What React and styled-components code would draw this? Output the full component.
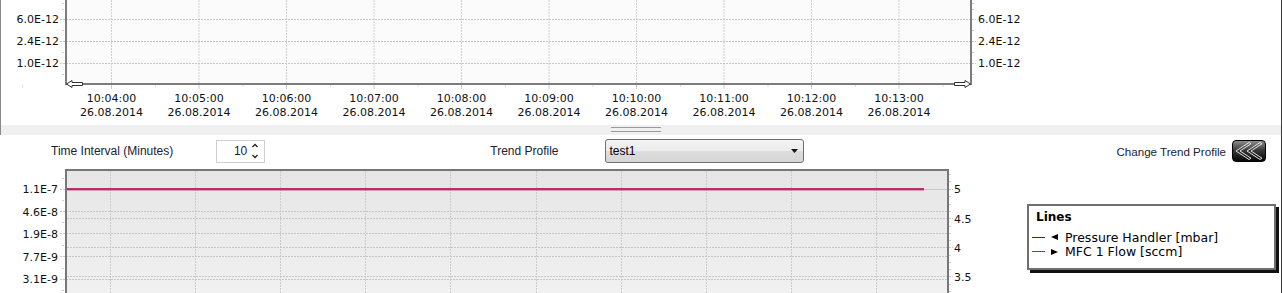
import React from "react";
import styled, { createGlobalStyle } from "styled-components";

const GlobalStyle = createGlobalStyle`
  html, body { margin: 0; padding: 0; background: #ffffff; }
  body { font-family: "Liberation Sans", Arial, sans-serif; }
`;

const Root = styled.div`
  width: 1282px;
  height: 293px;
  overflow: hidden;
  box-sizing: border-box;
  border-right: 1px solid #3c3c3c;
  background: #ffffff;
  display: flex;
  flex-direction: column;
`;

const TopPanel = styled.section`
  flex: none;
  height: 125px;
  border-left: 1px solid #8a8a8a;
  overflow: hidden;
`;

const Splitter = styled.div`
  flex: none;
  height: 10px;
  box-sizing: border-box;
  background: #f0f0f0;
  border-left: 1px solid #8a8a8a;
  padding: 2px 0 0 610px;
  display: flex;
  flex-direction: column;
  gap: 3px;
`;

const GripLine = styled.div`
  width: 50px;
  height: 1px;
  background: #9a9a9a;
`;

const BottomPanel = styled.section`
  flex: 1;
  display: flex;
  flex-direction: column;
  min-height: 0;
`;

const Toolbar = styled.div`
  flex: none;
  height: 32px;
  display: flex;
  align-items: center;
  padding: 0 15px 0 51px;
`;

const Label = styled.span`
  font-family: "Liberation Sans", Arial, sans-serif;
  font-size: ${(p) => p.$size || 12}px;
  color: #1b2230;
  margin-left: ${(p) => p.$ml || 0}px;
  white-space: nowrap;
`;

const Spinner = styled.div`
  margin-left: ${(p) => p.$ml}px;
  width: 49px;
  height: 23px;
  box-sizing: border-box;
  border: 1px solid #cfcfcf;
  display: flex;
  align-items: center;
  justify-content: flex-end;
  padding-right: 5px;
  gap: 4px;
  font-size: 12px;
  color: #1b2230;
`;

const Dropdown = styled.div`
  margin-left: ${(p) => p.$ml}px;
  width: 199px;
  height: 24px;
  box-sizing: border-box;
  border: 1px solid #707070;
  border-radius: 3px;
  background: linear-gradient(#f3f3f3 0%, #ebebeb 50%, #dddddd 51%, #d6d6d6 100%);
  display: flex;
  align-items: center;
  justify-content: space-between;
  padding: 0 5px 0 4px;
  font-size: 12px;
  color: #000;
`;

const Spacer = styled.div`
  flex: 1;
`;

const IconButton = styled.button`
  margin-left: 6px;
  width: 34px;
  height: 22px;
  padding: 0;
  box-sizing: border-box;
  border: 1px solid #000;
  border-radius: 4px;
  background: linear-gradient(#8c8c8c 0%, #3c3c3c 45%, #060606 100%);
  display: flex;
  align-items: center;
  justify-content: center;
`;

const ChartRow = styled.div`
  flex: 1;
  display: flex;
  align-items: flex-start;
`;

const Legend = styled.div`
  margin: 37px 0 0 27px;
  width: 249px;
  height: 66px;
  box-sizing: border-box;
  border: 2px solid #6f6f6f;
  box-shadow: 3px 3px 0 #111;
  background: #fff;
  padding: 4px 0 0 3px;
  font-family: "DejaVu Sans", Verdana, sans-serif;
  color: #000;
`;

const LegendTitle = styled.div`
  font-weight: bold;
  font-size: 12px;
  line-height: 15px;
  margin: 0 0 5px 4px;
`;

const LegendRow = styled.div`
  display: flex;
  align-items: center;
  height: 14.5px;
  font-size: 12.5px;
  white-space: nowrap;
`;

const Swatch = styled.span`
  display: inline-block;
  width: 13px;
  height: 1px;
  background: ${(p) => p.$color};
  margin-right: 6px;
`;

const Pointer = styled.svg`
  width: 7px;
  height: 6px;
  margin-right: 7px;
  flex: none;
`;

const FONT = '"DejaVu Sans", Verdana, sans-serif';
const GRID = "#c6c6c6";

function TopChart() {
  const gx = Array.from({ length: 10 }, (_, i) => 111 + 87.5 * i);
  const times = ["10:04:00", "10:05:00", "10:06:00", "10:07:00", "10:08:00", "10:09:00", "10:10:00", "10:11:00", "10:12:00", "10:13:00"];
  const ys = [
    [19, "6.0E-12"],
    [41, "2.4E-12"],
    [63, "1.0E-12"],
  ];
  const minor = [3, 9, 30, 52, 74];
  return (
    <svg width="1100" height="125" style={{ display: "block" }}>
      <g transform="translate(-1,0)">
        <rect x="66" y="0" width="904" height="83" fill="#fbfbfb" />
        {gx.map((x) => (
          <line key={x} x1={x + 0.5} x2={x + 0.5} y1="0" y2="83" stroke="#d0d0d0" strokeDasharray="2 1" />
        ))}
        {gx.map((x) => (
          <line key={"t" + x} x1={x + 0.5} x2={x + 0.5} y1="85" y2="89" stroke="#cccccc" />
        ))}
        {gx.map((x) => (
          <line key={"m" + x} x1={x + 44.5} x2={x + 44.5} y1="85" y2="87" stroke="#dddddd" />
        ))}
        <line x1="22.5" x2="22.5" y1="85" y2="87" stroke="#dddddd" />
        {ys.map(([y]) => (
          <line key={y} x1="60" x2="976" y1={y + 0.5} y2={y + 0.5} stroke={GRID} strokeDasharray="2 1" />
        ))}
        {minor.map((y) => (
          <g key={"mn" + y}>
            <line x1="62" x2="64" y1={y + 0.5} y2={y + 0.5} stroke="#cfcfcf" />
            <line x1="972" x2="974" y1={y + 0.5} y2={y + 0.5} stroke="#cfcfcf" />
          </g>
        ))}
        <rect x="65" y="0" width="2" height="85" fill="#7c7c7c" />
        <rect x="970" y="0" width="2" height="85" fill="#7c7c7c" />
        <rect x="65" y="83" width="907" height="2" fill="#7c7c7c" />
        <path d="M66.5,84 L72,80.5 L72,82.5 L82.5,82.5 L82.5,85.5 L72,85.5 L72,87.5 Z" fill="#fff" stroke="#333" strokeWidth="1" />
        <path d="M970.5,84 L965,80.5 L965,82.5 L954.5,82.5 L954.5,85.5 L965,85.5 L965,87.5 Z" fill="#fff" stroke="#333" strokeWidth="1" />
        {ys.map(([y, t]) => (
          <g key={"l" + y} fontFamily={FONT} fontSize="11" fill="#111">
            <text x="59" y={y + 4} textAnchor="end">{t}</text>
            <text x="978" y={y + 4}>{t}</text>
          </g>
        ))}
        {gx.map((x, i) => (
          <g key={"tl" + x} fontFamily={FONT} fontSize="11" fill="#111" textAnchor="middle">
            <text x={x + 0.5} y="102">{times[i]}</text>
            <text x={x + 0.5} y="116">26.08.2014</text>
          </g>
        ))}
      </g>
    </svg>
  );
}

function BottomChart() {
  const gx = Array.from({ length: 10 }, (_, i) => Math.round(110 + 85.1 * i));
  const left = [
    [189, "1.1E-7"],
    [211.5, "4.6E-8"],
    [233.5, "1.9E-8"],
    [256.5, "7.7E-9"],
    [279, "3.1E-9"],
  ];
  const right = [
    [189, "5"],
    [218.5, "4.5"],
    [247.5, "4"],
    [276.5, "3.5"],
  ];
  const lminor = [178, 200, 222, 245, 268, 290];
  const rminor = [174, 181, 196, 204, 211, 226, 233, 240, 255, 262, 269, 284, 291];
  return (
    <svg width="1000" height="126" style={{ display: "block", flex: "none" }}>
      <defs>
        <linearGradient id="plotbg" x1="0" y1="0" x2="0" y2="1">
          <stop offset="0" stopColor="#e6e6e6" />
          <stop offset="1" stopColor="#f1f1f1" />
        </linearGradient>
      </defs>
      <g transform="translate(0,-167)">
        <rect x="67" y="171" width="880" height="130" fill="url(#plotbg)" />
        {gx.map((x) => (
          <line key={x} x1={x + 0.5} x2={x + 0.5} y1="171" y2="293" stroke="#cbcbcb" strokeDasharray="2 1" />
        ))}
        {left.map(([y]) => (
          <line key={"l" + y} x1="60" x2="947" y1={Math.floor(y) + 0.5} y2={Math.floor(y) + 0.5} stroke={GRID} strokeDasharray="2 1" />
        ))}
        {right.map(([y]) => (
          <line key={"r" + y} x1="67" x2="953" y1={Math.floor(y) + 0.5} y2={Math.floor(y) + 0.5} stroke={GRID} strokeDasharray="2 1" />
        ))}
        {lminor.map((y) => (
          <line key={"lm" + y} x1="62" x2="64" y1={y + 0.5} y2={y + 0.5} stroke="#cfcfcf" />
        ))}
        {rminor.map((y) => (
          <line key={"rm" + y} x1="949" x2="951" y1={y + 0.5} y2={y + 0.5} stroke="#cfcfcf" />
        ))}
        <rect x="65" y="169" width="884" height="2" fill="#777" />
        <rect x="65" y="169" width="2" height="130" fill="#777" />
        <rect x="947" y="169" width="2" height="130" fill="#777" />
        <rect x="67" y="188" width="857" height="2.4" fill="#b2306b" />
        {left.map(([y, t]) => (
          <text key={"lt" + y} x="58" y={y + 4} textAnchor="end" fontFamily={FONT} fontSize="11" fill="#111">{t}</text>
        ))}
        {right.map(([y, t]) => (
          <text key={"rt" + y} x="954" y={y + 4} fontFamily={FONT} fontSize="11" fill="#111">{t}</text>
        ))}
      </g>
    </svg>
  );
}

function SpinArrows() {
  return (
    <svg width="8" height="18" viewBox="0 0 8 18">
      <path d="M1.5,5 L4,2.5 L6.5,5" fill="none" stroke="#222" strokeWidth="1.3" />
      <path d="M1.5,13 L4,15.5 L6.5,13" fill="none" stroke="#222" strokeWidth="1.3" />
    </svg>
  );
}

function DropArrow() {
  return (
    <svg width="7" height="4" viewBox="0 0 7 4">
      <path d="M0,0 L7,0 L3.5,4 Z" fill="#111" />
    </svg>
  );
}

function BackChevrons() {
  return (
    <svg width="30" height="20" viewBox="0 0 30 20">
      <g fill="none" stroke="#f2f2f2" strokeWidth="0.9" strokeLinejoin="miter">
        <path d="M15,1.5 L2,10 L15,18.5 L17,17.2 L6,10 L17,2.8 Z" />
        <path d="M26,1.5 L13,10 L26,18.5 L28,17.2 L17,10 L28,2.8 Z" />
      </g>
    </svg>
  );
}

export default function App() {
  return (
    <>
      <GlobalStyle />
      <Root>
        <TopPanel>
          <TopChart />
        </TopPanel>
        <Splitter>
          <GripLine />
          <GripLine />
        </Splitter>
        <BottomPanel>
          <Toolbar>
            <Label>Time Interval (Minutes)</Label>
            <Spinner $ml={43}>
              <span>10</span>
              <SpinArrows />
            </Spinner>
            <Label $ml={225}>Trend Profile</Label>
            <Dropdown $ml={46}>
              <span>test1</span>
              <DropArrow />
            </Dropdown>
            <Spacer />
            <Label $size={11.6}>Change Trend Profile</Label>
            <IconButton aria-label="Change Trend Profile">
              <BackChevrons />
            </IconButton>
          </Toolbar>
          <ChartRow>
            <BottomChart />
            <Legend>
              <LegendTitle>Lines</LegendTitle>
              <LegendRow>
                <Swatch $color="#1c1ce0" />
                <Pointer viewBox="0 0 7 6"><path d="M0,3 L7,0 L7,6 Z" fill="#000" /></Pointer>
                Pressure Handler [mbar]
              </LegendRow>
              <LegendRow>
                <Swatch $color="#d81c1c" />
                <Pointer viewBox="0 0 7 6"><path d="M7,3 L0,0 L0,6 Z" fill="#000" /></Pointer>
                MFC 1 Flow [sccm]
              </LegendRow>
            </Legend>
          </ChartRow>
        </BottomPanel>
      </Root>
    </>
  );
}
